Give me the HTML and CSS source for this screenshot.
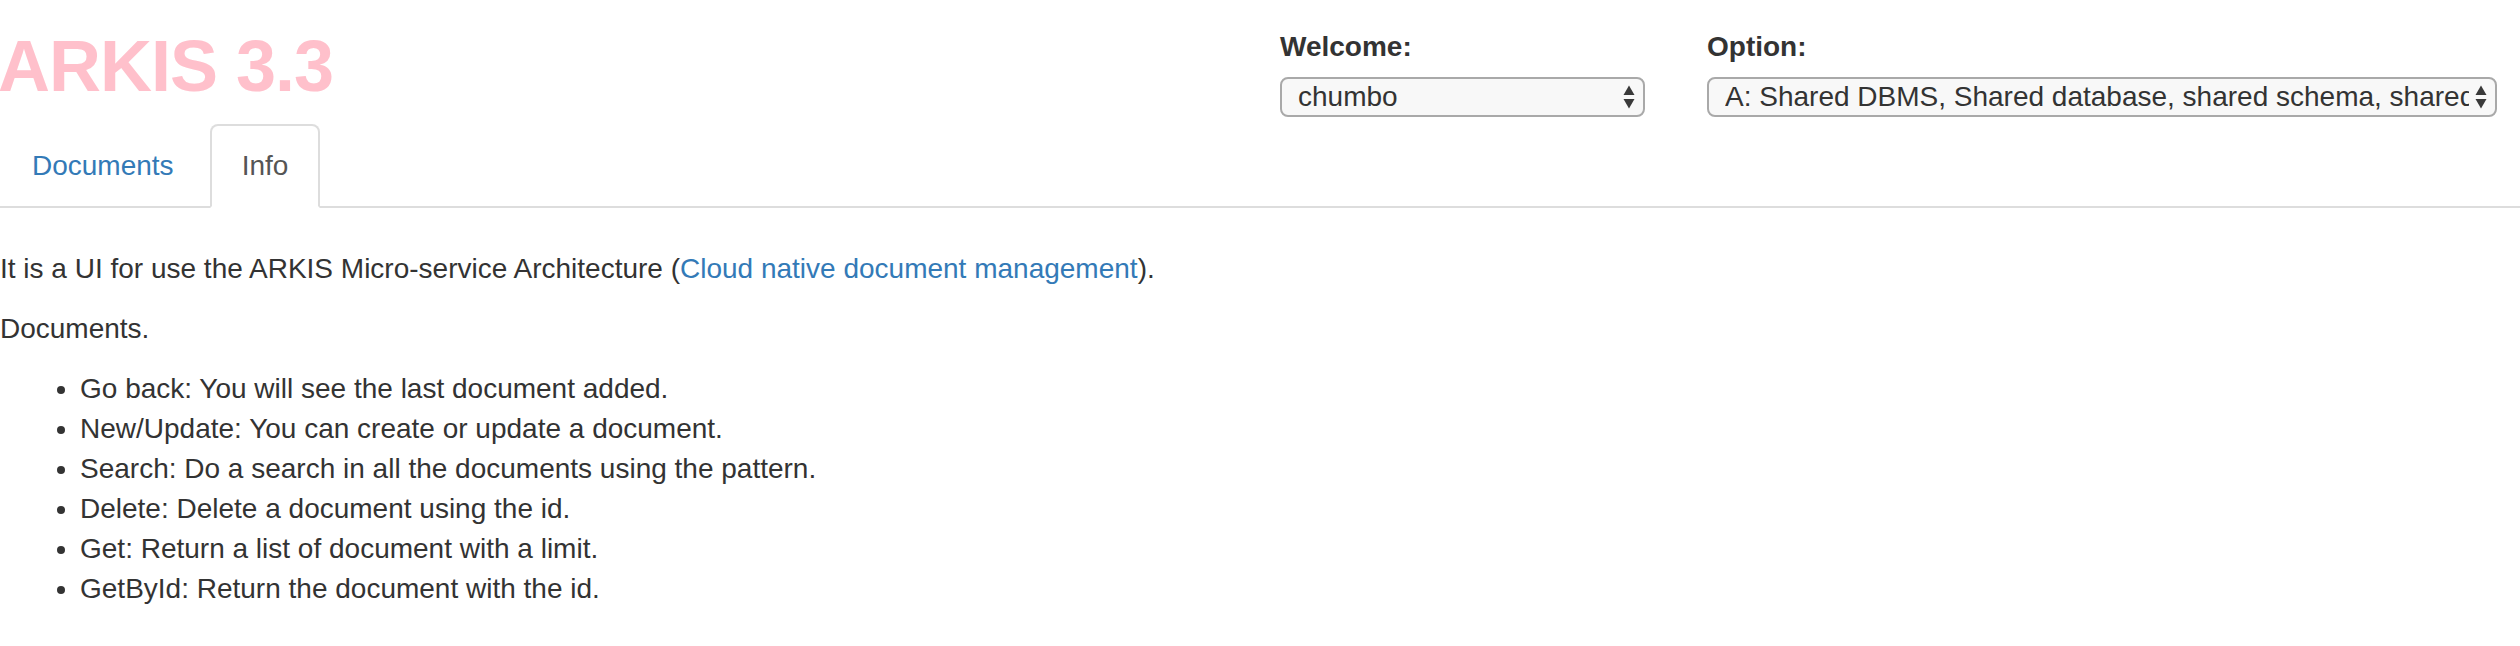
FILE: index.html
```html
<!DOCTYPE html>
<html lang="en">
<head>
<meta charset="utf-8">
<title>ARKIS 3.3</title>
<link rel="stylesheet" href="styles.css">
</head>
<body>
<div class="page">
  <header class="header">
    <h1 class="brand">ARKIS 3.3</h1>
    <div class="field field-welcome">
      <label class="field-label" for="user">Welcome:</label>
      <div class="select-wrap select-user">
        <select id="user" class="select"><option>chumbo</option></select>
        <svg class="select-arrows" width="14" height="26" viewBox="0 0 14 26" aria-hidden="true"><path d="M7 1.5 L12.5 11 L1.5 11 Z" fill="#3a3a3a"/><path d="M1.5 15 L12.5 15 L7 24.5 Z" fill="#3a3a3a"/></svg>
      </div>
    </div>
    <div class="field field-option">
      <label class="field-label" for="opt">Option:</label>
      <div class="select-wrap">
        <select id="opt" class="select"><option>A: Shared DBMS, Shared database, shared schema, shared table</option></select>
        <svg class="select-arrows" width="14" height="26" viewBox="0 0 14 26" aria-hidden="true"><path d="M7 1.5 L12.5 11 L1.5 11 Z" fill="#3a3a3a"/><path d="M1.5 15 L12.5 15 L7 24.5 Z" fill="#3a3a3a"/></svg>
      </div>
    </div>
  </header>

  <ul class="tabs">
    <li class="tab"><a href="#">Documents</a></li>
    <li class="tab active"><a href="#">Info</a></li>
  </ul>

  <div class="tab-content">
    <p>It is a UI for use the ARKIS Micro-service Architecture (<a href="#">Cloud native document management</a>).</p>
    <p>Documents.</p>
    <ul class="list">
      <li>Go back: You will see the last document added.</li>
      <li>New/Update: You can create or update a document.</li>
      <li>Search: Do a search in all the documents using the pattern.</li>
      <li>Delete: Delete a document using the id.</li>
      <li>Get: Return a list of document with a limit.</li>
      <li>GetById: Return the document with the id.</li>
    </ul>
  </div>
</div>
</body>
</html>
```

FILE: styles.css
```css
* { box-sizing: border-box; }

html, body {
  margin: 0;
  padding: 0;
  background: #fff;
}

body {
  font-family: "Liberation Sans", Arial, Helvetica, sans-serif;
  font-size: 28px;
  line-height: 40px;
  color: #333;
}

a {
  color: #337ab7;
  text-decoration: none;
}

.page {
  width: 2520px;
}

.header {
  display: flex;
  align-items: flex-start;
  padding-top: 27px;
}

.brand {
  flex: 1;
  margin: 0 0 0 -2px;
  font-size: 72px;
  line-height: 79px;
  font-weight: 700;
  letter-spacing: -1px;
  color: #ffc0cb;
}

.field {
  display: flex;
  flex-direction: column;
}

.field-welcome {
  width: 427px;
}

.field-option {
  width: 790px;
  margin-right: 23px;
}

.field-label {
  font-weight: 700;
  margin-bottom: 10px;
}

.select-wrap {
  position: relative;
}

.select-user {
  width: 365px;
}

.select {
  display: block;
  width: 100%;
  height: 40px;
  margin: 0;
  padding: 0 26px 0 16px;
  font-family: "Liberation Sans", Arial, Helvetica, sans-serif;
  font-size: 28px;
  line-height: 36px;
  color: #333;
  background: #f8f8f8;
  border: 2px solid #a9a9a9;
  border-radius: 8px;
  -webkit-appearance: none;
  appearance: none;
  outline: none;
}

.select-arrows {
  position: absolute;
  right: 9px;
  top: 7px;
  pointer-events: none;
}

.tabs {
  display: flex;
  list-style: none;
  margin: 7px 0 0;
  padding: 0;
  border-bottom: 2px solid #ddd;
}

.tab {
  margin-bottom: -2px;
}

.tab a {
  display: block;
  margin-right: 4px;
  padding: 20px 30px;
  line-height: 40px;
  border: 2px solid transparent;
  border-radius: 8px 8px 0 0;
}

.tab.active a {
  color: #555;
  background: #fff;
  border-color: #ddd;
  border-bottom-color: transparent;
}

.tab-content {
  padding-top: 41px;
}

.tab-content p {
  margin: 0 0 20px;
}

.list {
  margin: 0 0 20px;
  padding-left: 80px;
}
```
